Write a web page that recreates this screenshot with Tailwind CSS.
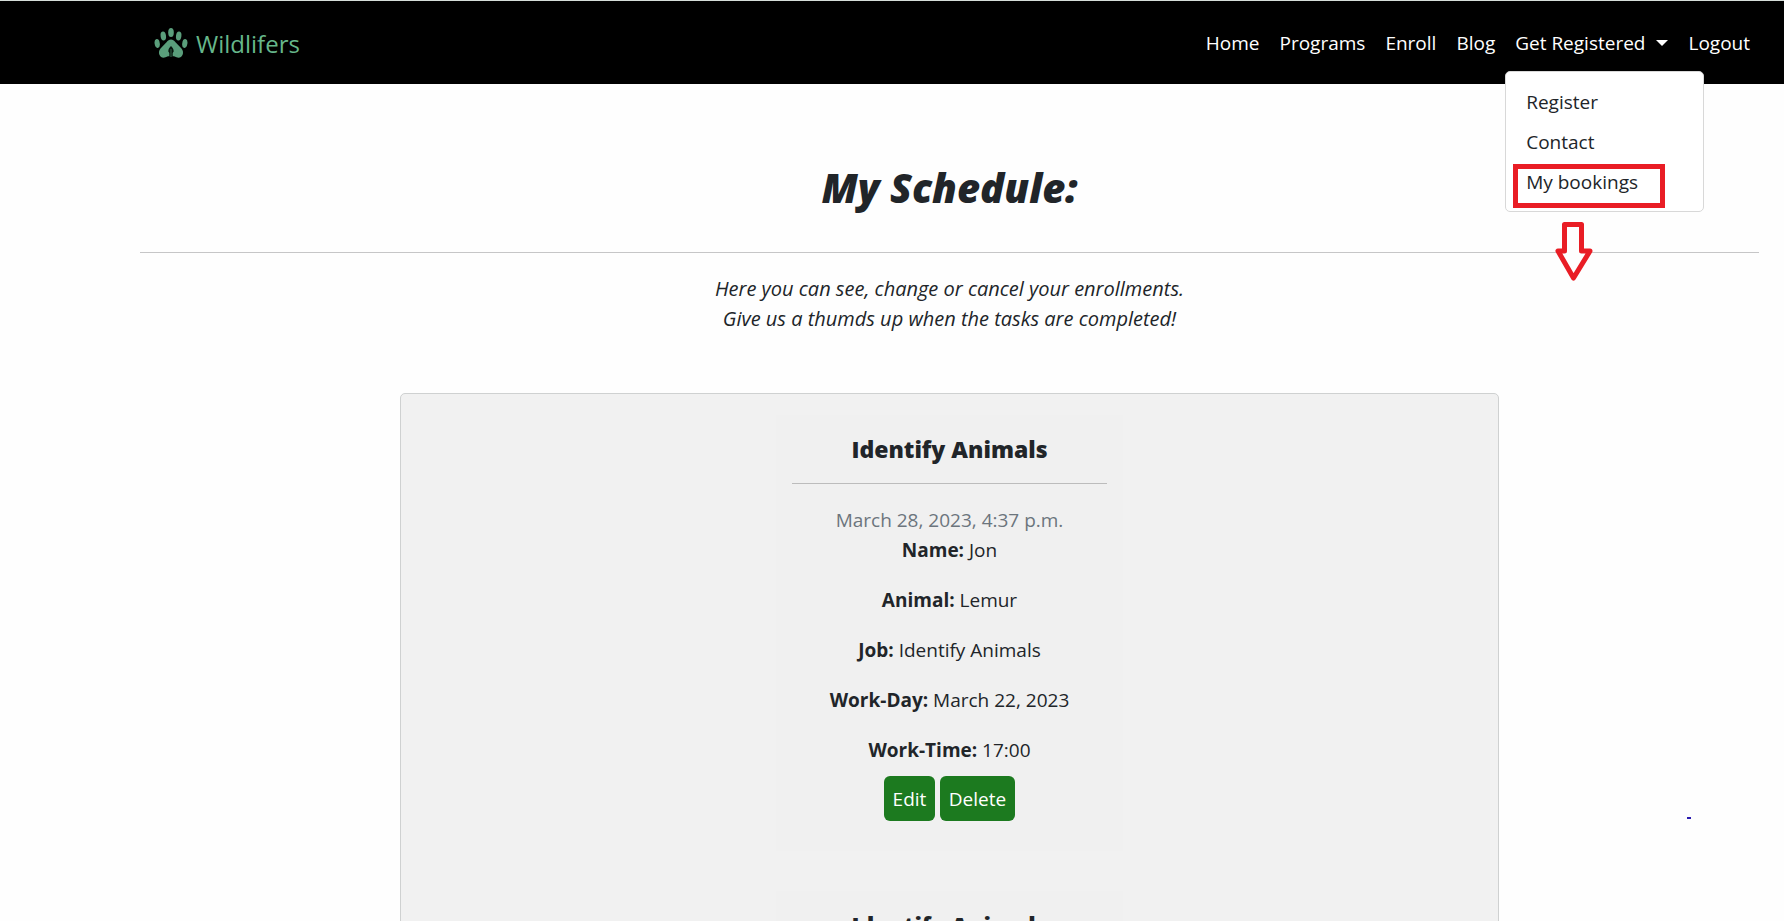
<!DOCTYPE html>
<html lang="en">
<head>
<meta charset="utf-8">
<meta name="viewport" content="width=device-width, initial-scale=1">
<title>Wildlifers</title>
<script src="https://cdn.jsdelivr.net/npm/@tailwindcss/browser@4"></script>
</head>
<body class="flex h-screen flex-col overflow-hidden bg-[#fefefe] font-['Open_Sans','Noto_Sans',sans-serif] text-[19px] leading-[30px] text-[#212529]">
<header class="flex h-[84px] shrink-0 items-center justify-between border-t border-[#d5ddd9] bg-black pr-6 pl-[154px]">
  <a href="#" class="flex items-center gap-2 text-2xl text-[#66b78b]">
    <svg class="h-8 w-[34px]" viewBox="0 0 34 32" aria-hidden="true">
      <g fill="#5a9e7b">
        <ellipse cx="17" cy="5.5" rx="2.8" ry="4.5"/>
        <ellipse cx="9.3" cy="9" rx="2.7" ry="4.5" transform="rotate(-8 9.3 9)"/>
        <ellipse cx="24.7" cy="9" rx="2.7" ry="4.5" transform="rotate(8 24.7 9)"/>
        <ellipse cx="3.2" cy="16.5" rx="2.6" ry="4.5" transform="rotate(-8 3.2 16.5)"/>
        <ellipse cx="30.8" cy="16.5" rx="2.6" ry="4.5" transform="rotate(8 30.8 16.5)"/>
        <path d="M17 12.5C18.800 12.500 20 13.500 21.500 15.300L27.500 21.500C29 23.500 29.500 25.500 28.600 27.800C27.500 30.500 25 31.200 22.500 30.300L20 29.300H14L11.500 30.300C9 31.200 6.500 30.500 5.400 27.800C4.500 25.500 5 23.500 6.500 21.500L12.500 15.300C14 13.500 15.200 12.500 17 12.500Z"/>
      </g>
      <path d="M15.300 30V26L14.300 24.500C14.300 22 15.300 20.500 17 19C18.700 20.500 19.700 22 19.700 24.500L18.700 26V30Z" fill="#06150d"/>
      <path d="M17 22V30" stroke="#3f7658" stroke-width=".8"/>
    </svg>
    <span class="pt-[3px]">Wildlifers</span>
  </a>
  <nav class="flex text-white" aria-label="Main">
    <a href="#" class="px-[10px]">Home</a>
    <a href="#" class="px-[10px]">Programs</a>
    <a href="#" class="px-[10px]">Enroll</a>
    <a href="#" class="px-[10px]">Blog</a>
    <div class="relative">
      <button type="button" class="flex items-center gap-[11px] px-[10px]" aria-expanded="true" aria-haspopup="true">Get Registered
        <svg class="h-[6px] w-3" viewBox="0 0 12 6" aria-hidden="true"><path d="M0 0H12L6 6Z" fill="#fff"/></svg>
      </button>
      <div class="absolute top-[43px] left-0 z-10 flex w-[199px] flex-col rounded-[5px] border border-[#d8d8d8] bg-white pt-[10px] pb-[9px] text-[#212529]">
        <a href="#" class="px-5 py-[5px]">Register</a>
        <a href="#" class="px-5 py-[5px]">Contact</a>
        <a href="#" class="px-5 py-[5px]">My bookings</a>
        <span class="absolute top-[92px] left-[7px] h-11 w-[152px] border-5 border-[#e91d25]"></span>
        <svg class="absolute top-[149px] left-[48px] h-[62px] w-10" viewBox="0 0 40 62" aria-hidden="true"><path d="M10.500 3.500H27.500V30H36L19.500 57L4 30H10.500Z" fill="#fefefe" stroke="#e91d25" stroke-width="5" stroke-linejoin="round"/></svg>
      </div>
    </div>
    <a href="#" class="px-[10px]">Logout</a>
  </nav>
</header>
<main class="flex min-h-0 grow flex-col overflow-hidden pt-20 pr-[25px] pl-[140px] text-center">
  <h1 class="text-[40px] leading-[48px] font-extrabold italic">My Schedule:</h1>
  <hr class="mt-10 mb-[21px] border-[#c6c6c7]">
  <p class="text-xl leading-[30px] italic">Here you can see, change or cancel your enrollments.<br>Give us a thumds up when the tasks are completed!</p>
  <section class="mx-auto mt-[59px] flex w-[1099px] max-w-full shrink-0 flex-col items-center gap-10 rounded-[5px] border border-[#cfd1d1] bg-[#f1f1f1] py-[21px]">
    <article class="w-[347px] bg-[#f0f0f0] px-4 pt-4 pb-[30px]">
      <h2 class="text-[23px] leading-9 font-extrabold">Identify Animals</h2>
      <hr class="mt-4 mb-[21px] border-[#bcbcbc]">
      <p class="text-[#6c757d]">March 28, 2023, 4:37 p.m.</p>
      <div class="flex flex-col gap-5">
        <p><strong>Name:</strong> Jon</p>
        <p><strong>Animal:</strong> Lemur</p>
        <p><strong>Job:</strong> Identify Animals</p>
        <p><strong>Work-Day:</strong> March 22, 2023</p>
        <p><strong>Work-Time:</strong> 17:00</p>
      </div>
      <div class="mt-[11px] flex justify-center gap-[5px] text-white">
        <button type="button" class="h-[45px] w-[51px] rounded-md bg-[#1c7a1f]">Edit</button>
        <button type="button" class="h-[45px] w-[75px] rounded-md bg-[#1c7a1f]">Delete</button>
      </div>
    </article>
    <article class="w-[347px] bg-[#f0f0f0] px-4 pt-4 pb-[30px]">
      <h2 class="text-[23px] leading-9 font-extrabold">Identify Animals</h2>
      <hr class="mt-4 mb-[21px] border-[#bcbcbc]">
    </article>
  </section>
</main>
<span class="absolute top-[817px] left-[1687px] h-[2px] w-1 bg-[#2a1bb0]"></span>
</body>
</html>
